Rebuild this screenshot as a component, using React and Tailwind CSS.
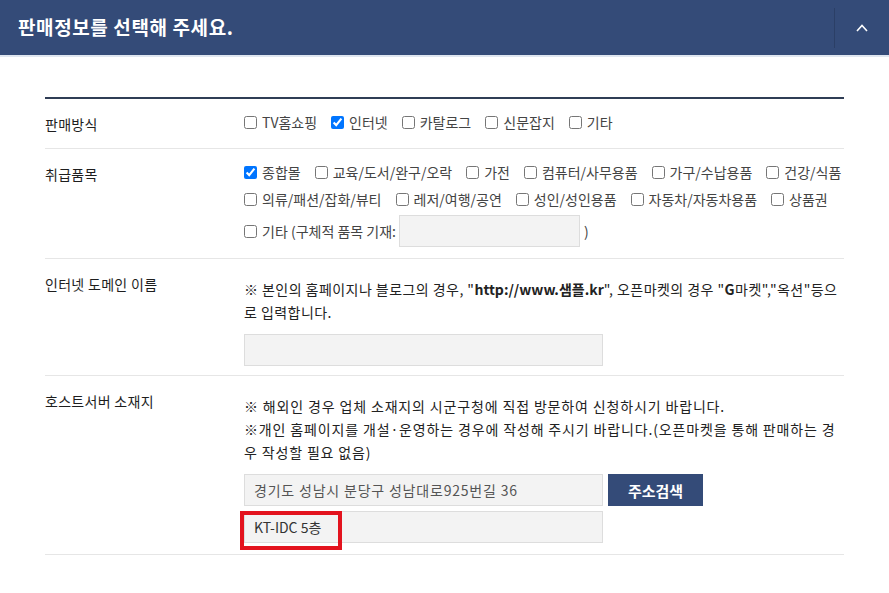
import React from 'react'

const font = { fontFamily: '"Noto Sans CJK KR", "Noto Sans", sans-serif' }

function Check({ label, checked }) {
  return (
    <label className="inline-flex items-center whitespace-nowrap">
      <input type="checkbox" defaultChecked={checked} className="h-[13px] w-[13px] accent-[#0075ff]" />
      <span className="ml-[5px]">{label}</span>
    </label>
  )
}

function Row({ label, children, className = '' }) {
  return (
    <div className="flex border-b border-[#e6e6e6]">
      <div className="w-[199px] shrink-0 pt-[13px] text-[14px] leading-[24px] tracking-[0.3px] text-[#1e1e1e]">{label}</div>
      <div className={`flex-1 text-[14px] text-[#444] ${className}`}>{children}</div>
    </div>
  )
}

const itemRows = [
  [['종합몰', true], ['교육/도서/완구/오락'], ['가전'], ['컴퓨터/사무용품'], ['가구/수납용품'], ['건강/식품']],
  [['의류/패션/잡화/뷰티'], ['레저/여행/공연'], ['성인/성인용품'], ['자동차/자동차용품'], ['상품권']],
]

export default function App() {
  return (
    <div className="min-h-[593px] w-full bg-white" style={font}>
      <header className="flex h-[55px] items-center bg-[#344b78] pl-[18px]">
        <h1 className="flex-1 text-[19px] font-bold tracking-[0.6px] text-white">판매정보를 선택해 주세요.</h1>
        <div className="h-[40px] w-px bg-[#2b3f66]" />
        <div className="flex w-[54px] items-center justify-center">
          <svg width="12" height="8" viewBox="0 0 12 8" fill="none">
            <polyline points="1,7 6,1.5 11,7" stroke="white" strokeWidth="1.6" />
          </svg>
        </div>
      </header>
      <div className="h-[2px] bg-[#dfe6f0]" />

      <div className="mx-[45px] mt-[40px] border-t-2 border-[#2f3d55]">
        <Row label="판매방식" className="pt-[10px] pb-[12px] leading-[27px]">
          <div className="flex gap-x-[14px]">
            <Check label="TV홈쇼핑" />
            <Check label="인터넷" checked />
            <Check label="카탈로그" />
            <Check label="신문잡지" />
            <Check label="기타" />
          </div>
        </Row>

        <Row label="취급품목" className="pt-[10px] pb-[11px] leading-[27px]">
          {itemRows.map((row, i) => (
            <div key={i} className="flex gap-x-[14px]">
              {row.map(([l, c]) => (
                <Check key={l} label={l} checked={c} />
              ))}
            </div>
          ))}
          <div className="mt-[2px] flex items-center">
            <Check label="기타 (구체적 품목 기재:" />
            <div className="ml-[3px] h-[32px] w-[181px] border border-[#dddddd] bg-[#f3f3f3]" />
            <span className="ml-[4px]">)</span>
          </div>
        </Row>

        <Row label="인터넷 도메인 이름" className="pt-[19px] pb-[9px] leading-[23px]">
          <p className="whitespace-nowrap tracking-[0.45px] text-[#222]">
            ※ 본인의 홈페이지나 블로그의 경우, "<b className="font-semibold tracking-normal">http://www.샘플.kr</b>", 오픈마켓의 경우 "<b className="font-semibold">G</b>마켓","옥션"등으
            <br />로 입력합니다.
          </p>
          <div className="mt-[10px] h-[32px] w-[359px] border border-[#dddddd] bg-[#f3f3f3]" />
        </Row>

        <Row label="호스트서버 소재지" className="pt-[19px] pb-[11px] leading-[23px]">
          <p className="whitespace-nowrap tracking-[0.85px] text-[#222]">
            ※ 해외인 경우 업체 소재지의 시군구청에 직접 방문하여 신청하시기 바랍니다.
            <br />※개인 홈페이지를 개설·운영하는 경우에 작성해 주시기 바랍니다.(오픈마켓을 통해 판매하는 경
            <br />우 작성할 필요 없음)
          </p>
          <div className="mt-[10px] flex gap-[5px]">
            <div className="flex h-[32px] w-[359px] items-center border border-[#dddddd] bg-[#f3f3f3] px-[9px] tracking-[0.8px] text-[#555]">
              경기도 성남시 분당구 성남대로925번길 36
            </div>
            <button className="h-[32px] w-[95px] bg-[#344b78] text-[15px] font-bold text-white">주소검색</button>
          </div>
          <div className="relative mt-[5px] flex h-[32px] w-[359px] items-center border border-[#dddddd] bg-[#f3f3f3] px-[9px] text-[#333]">
            KT-IDC 5층
            <div className="pointer-events-none absolute left-[-5px] top-[-1px] h-[39px] w-[102px] border-[4px] border-[#e3131e]" />
          </div>
        </Row>
      </div>
    </div>
  )
}
